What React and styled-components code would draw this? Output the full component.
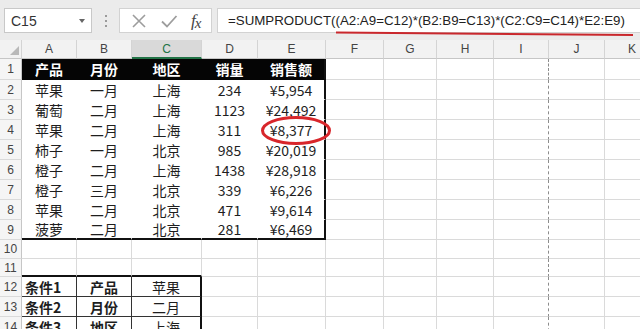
import React from "react";
import styled, { createGlobalStyle } from "styled-components";

const GlobalStyle = createGlobalStyle`
  html, body {
    margin: 0;
    padding: 0;
    background: #fff;
    overflow: hidden;
  }
`;

const COLS = ["A", "B", "C", "D", "E", "F", "G", "H", "I", "J", "K"];
const WIDTHS = [22, 55, 55, 70, 56, 68, 58, 53, 57, 55, 56, 55];
const HEIGHTS = [19, 21, 20, 20, 20, 20, 20, 20, 20, 20, 19, 18, 20, 20, 20];

const header = ["产品", "月份", "地区", "销量", "销售额"];
const data = [
  ["苹果", "一月", "上海", "234", "¥5,954"],
  ["葡萄", "二月", "上海", "1123", "¥24,492"],
  ["苹果", "二月", "上海", "311", "¥8,377"],
  ["柿子", "一月", "北京", "985", "¥20,019"],
  ["橙子", "二月", "上海", "1438", "¥28,918"],
  ["橙子", "三月", "北京", "339", "¥6,226"],
  ["苹果", "二月", "北京", "471", "¥9,614"],
  ["菠萝", "二月", "北京", "281", "¥6,469"],
];
const conditions = [
  ["条件1", "产品", "苹果"],
  ["条件2", "月份", "二月"],
  ["条件3", "地区", "上海"],
];

const Page = styled.div`
  width: 640px;
  height: 329px;
  overflow: hidden;
  background: #fff;
  display: flex;
  flex-direction: column;
`;

const FormulaBar = styled.div`
  display: flex;
  align-items: flex-start;
  height: 40px;
  padding: 8px 0 0 4px;
  box-sizing: border-box;
  background: #ebebeb;
  flex-shrink: 0;
`;

const NameBox = styled.div`
  width: 88px;
  height: 25px;
  box-sizing: border-box;
  background: #fff;
  border: 1px solid #c8c8c8;
  display: flex;
  align-items: center;
  justify-content: space-between;
  padding: 0 6px 0 6px;
  font-family: "Liberation Sans", Arial, sans-serif;
  font-size: 14px;
  color: #333;
`;

const Caret = styled.span`
  width: 0;
  height: 0;
  border-left: 3.5px solid transparent;
  border-right: 3.5px solid transparent;
  border-top: 4px solid #666;
`;

const Grip = styled.div`
  width: 27px;
  height: 25px;
  display: flex;
  flex-direction: column;
  align-items: center;
  justify-content: center;
  gap: 3px;

  span {
    width: 2px;
    height: 2px;
    background: #9a9a9a;
  }
`;

const IconBox = styled.div`
  width: 93px;
  height: 25px;
  box-sizing: border-box;
  background: #fff;
  border: 1px solid #d2d2d2;
  display: flex;
  align-items: center;
  justify-content: space-around;
  padding: 0 4px;
  margin-right: 5px;
`;

const Fx = styled.span`
  font-family: "Liberation Serif", "Times New Roman", serif;
  font-style: italic;
  font-size: 17px;
  color: #444;
  letter-spacing: -1px;

  i {
    font-size: 15px;
    position: relative;
    top: 2px;
  }
`;

const FormulaInput = styled.div`
  position: relative;
  flex: 1;
  height: 25px;
  box-sizing: border-box;
  background: #fff;
  border: 1px solid #d2d2d2;
  border-right: none;
  display: flex;
  align-items: center;
  padding-left: 10px;
  font-family: "Liberation Sans", Arial, sans-serif;
  font-size: 13.3px;
  color: #222;
  white-space: nowrap;
  overflow: visible;
`;

const Underline = styled.svg`
  position: absolute;
  left: 117px;
  top: 22px;
`;

const Sheet = styled.div`
  position: relative;
  display: grid;
  grid-template-columns: ${WIDTHS.map((w) => w + "px").join(" ")};
  grid-template-rows: ${HEIGHTS.map((h) => h + "px").join(" ")};
  width: max-content;
`;

const Corner = styled.div`
  background: #f2f2f2;
  border-right: 1px solid #d4d4d4;
  border-bottom: 1px solid #c6c6c6;
  display: flex;
  align-items: flex-end;
  justify-content: flex-end;
  padding: 0 2px 3px 0;
  box-sizing: border-box;
`;

const ColHeader = styled.div`
  box-sizing: border-box;
  display: flex;
  align-items: center;
  justify-content: center;
  font-family: "Liberation Sans", Arial, sans-serif;
  font-size: 12px;
  color: ${(p) => (p.$selected ? "#217346" : "#444")};
  background: ${(p) => (p.$selected ? "#d9d9d9" : "#f2f2f2")};
  border-right: 1px solid #d4d4d4;
  border-bottom: ${(p) => (p.$selected ? "2px solid #217346" : "1px solid #c6c6c6")};
`;

const RowHeader = styled.div`
  box-sizing: border-box;
  display: flex;
  align-items: center;
  justify-content: center;
  font-family: "Liberation Sans", Arial, sans-serif;
  font-size: 12px;
  color: #444;
  background: #f5f5f5;
  border-right: 1px solid #c6c6c6;
  border-bottom: 1px solid #dadada;
`;

const rightBorder = (p) => {
  if (p.$edgeRight) return "2px solid #111";
  if (p.$tone === "head" || p.$tone === "body") return "1px solid transparent";
  if (p.$tone === "box") return "1px solid #333";
  if (p.$pageBreak) return "1px dashed #8c8c8c";
  return "1px solid #dadada";
};

const bottomBorder = (p) => {
  if (p.$edgeBottom) return "2px solid #111";
  if (p.$tone === "head" || p.$tone === "body") return "1px solid transparent";
  if (p.$tone === "box") return "1px solid #333";
  return "1px solid #dadada";
};

const Cell = styled.div`
  box-sizing: border-box;
  display: flex;
  align-items: center;
  justify-content: ${(p) => (p.$align === "left" ? "flex-start" : "center")};
  padding: 0 3px;
  overflow: hidden;
  white-space: nowrap;
  font-family: "Noto Sans CJK SC", "Liberation Sans", sans-serif;
  font-size: 14px;
  line-height: 1;
  font-weight: ${(p) => (p.$bold ? 700 : 400)};
  color: ${(p) => (p.$tone === "head" ? "#fff" : "#1e1e1e")};
  background: ${(p) => (p.$tone === "head" ? "#050505" : "#fff")};
  border-right: ${rightBorder};
  border-bottom: ${bottomBorder};
`;

const Circle = styled.svg`
  position: absolute;
  left: 260px;
  top: 75px;
  pointer-events: none;
`;

function cellFor(r, c) {
  const p = { $pageBreak: c === 8 };
  if (r === 1 && c < 5) {
    return { ...p, $tone: "head", $bold: true, $edgeRight: c === 4, text: header[c] };
  }
  if (r >= 2 && r <= 9 && c < 5) {
    return {
      ...p,
      $tone: "body",
      $edgeRight: c === 4,
      $edgeBottom: r === 9,
      text: data[r - 2][c],
    };
  }
  if (r === 11 && c < 3) {
    return { ...p, $edgeBottom: true };
  }
  if (r >= 12 && c < 3) {
    return {
      ...p,
      $tone: "box",
      $bold: c < 2,
      $align: c === 0 ? "left" : "center",
      $edgeRight: c === 2,
      text: conditions[r - 12][c],
    };
  }
  return p;
}

export default function App() {
  const rows = [];
  for (let r = 1; r <= 14; r++) {
    rows.push(<RowHeader key={"h" + r}>{r}</RowHeader>);
    COLS.forEach((_, c) => {
      const { text, ...props } = cellFor(r, c);
      rows.push(
        <Cell key={r + "-" + c} {...props}>
          {text}
        </Cell>
      );
    });
  }

  return (
    <Page>
      <GlobalStyle />
      <FormulaBar>
        <NameBox>
          C15
          <Caret />
        </NameBox>
        <Grip>
          <span />
          <span />
          <span />
        </Grip>
        <IconBox>
          <svg width="16" height="16" viewBox="0 0 16 16">
            <path d="M2 2 L14 14 M14 2 L2 14" stroke="#9d9d9d" strokeWidth="1.6" fill="none" />
          </svg>
          <svg width="18" height="16" viewBox="0 0 18 16">
            <path d="M2 8.5 L7 13.5 L16.5 3" stroke="#9d9d9d" strokeWidth="1.8" fill="none" />
          </svg>
          <Fx>
            f<i>x</i>
          </Fx>
        </IconBox>
        <FormulaInput>
          =SUMPRODUCT((A2:A9=C12)*(B2:B9=C13)*(C2:C9=C14)*E2:E9)
          <Underline width="300" height="6" viewBox="0 0 300 6">
            <path d="M1 1.5 Q150 2.5 298 4" stroke="#c9272c" strokeWidth="2" fill="none" />
          </Underline>
        </FormulaInput>
      </FormulaBar>
      <Sheet>
        <Corner>
          <svg width="9" height="9" viewBox="0 0 9 9">
            <polygon points="9,0 9,9 0,9" fill="#b9b9b9" />
          </svg>
        </Corner>
        {COLS.map((col) => (
          <ColHeader key={col} $selected={col === "C"}>
            {col}
          </ColHeader>
        ))}
        {rows}
        <Circle width="72" height="31" viewBox="0 0 72 31">
          <ellipse cx="36" cy="15.5" rx="33.5" ry="13" stroke="#d8262b" strokeWidth="3" fill="none" />
        </Circle>
      </Sheet>
    </Page>
  );
}
